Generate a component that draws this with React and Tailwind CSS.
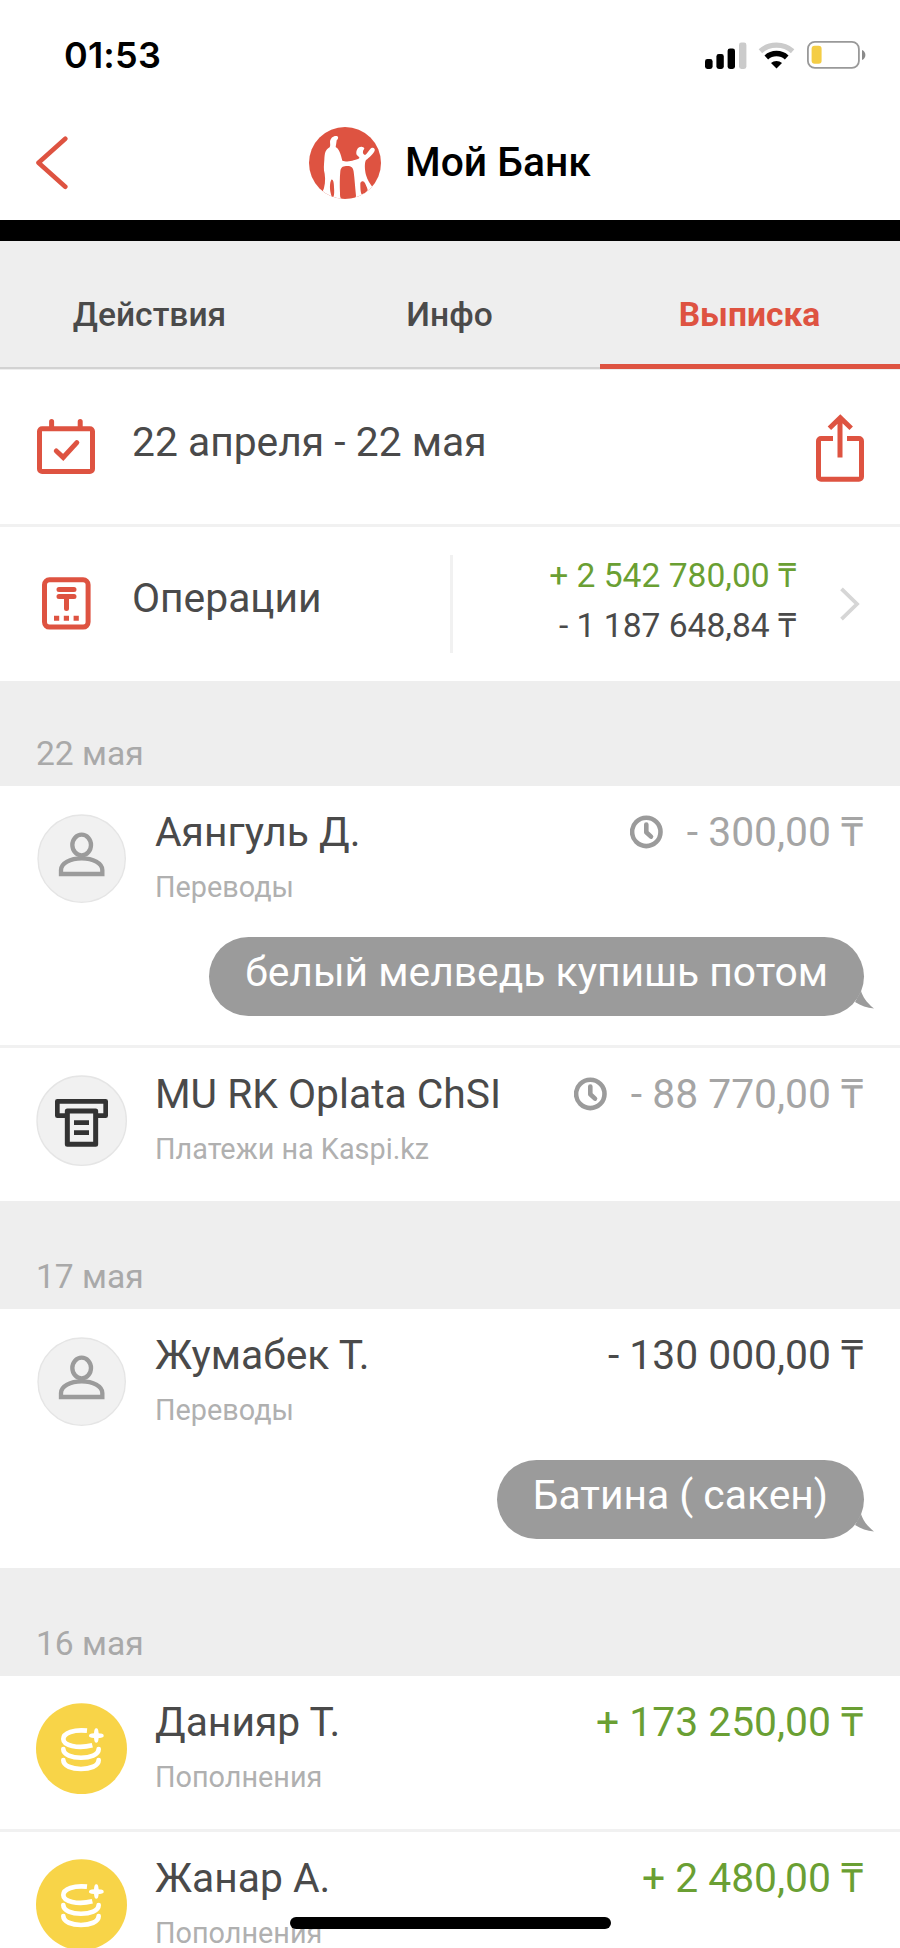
import clsx from 'clsx';

/* ──── Icons ──── */
const SignalIcon = () => (
  <svg width="42" height="27" viewBox="0 0 42 27">
    <rect x="0" y="17" width="7.6" height="10" rx="2.4" fill="#000" />
    <rect x="11.4" y="12" width="7.4" height="15" rx="2.4" fill="#000" />
    <rect x="22.6" y="6.4" width="7.4" height="20.6" rx="2.4" fill="#000" />
    <rect x="34" y="0.6" width="7.4" height="26.4" rx="2.4" fill="#cbcbcb" />
  </svg>
);

const WifiIcon = () => (
  <svg width="37" height="27" viewBox="0 0 37 27" fill="none">
    <path d="M2.4 9.2C11.5 1.1 25.5 1.1 34.6 9.2" stroke="#cbcbcb" strokeWidth="5.2" />
    <path d="M8.3 15.4C14 10.2 23 10.2 28.7 15.4" stroke="#000" strokeWidth="5.4" />
    <path d="M18.5 26.6L13 20.9C16 18.2 21 18.2 24 20.9Z" fill="#000" />
  </svg>
);

const BatteryIcon = () => (
  <svg width="59" height="28" viewBox="0 0 59 28" fill="none">
    <rect x="0.9" y="0.9" width="51" height="26" rx="7" stroke="#999" strokeWidth="1.8" />
    <rect x="4.6" y="4.8" width="10" height="18" rx="3" fill="#f4cd45" />
    <path d="M55 9C57.2 9.8 58.4 11.8 58.4 14S57.2 18.2 55 19Z" fill="#8a8a8a" />
  </svg>
);

const BackIcon = () => (
  <svg width="32" height="54" viewBox="0 0 32 54" fill="none">
    <path d="M29.3 2.7L2.5 26.7L29.3 50.7" stroke="#de5341" strokeWidth="4.6" strokeLinecap="round" strokeLinejoin="round" />
  </svg>
);

const Logo = () => (
  <svg width="72" height="72" viewBox="0 0 216 216">
    <clipPath id="logo-circle">
      <circle cx="108" cy="108" r="108" />
    </clipPath>
    <g clipPath="url(#logo-circle)">
      <rect width="216" height="216" fill="#de5341" />
      <path
        fill="#fff"
        d="M63 44C64 32 74 25 84 27C90 30 87 37 83 40C82 49 81 55 80 60C89 65 93 76 96 86L100 101C108 104 124 104 134 100C142 97 149 97 151 93C152 88 144 88 142 80C141 68 148 58 158 59C166 60 168 64 164 68C161 72 160 80 168 84C175 81 180 68 187 63C194 60 199 65 197 71C193 81 180 92 171 99C166 108 167 128 171 144C175 159 183 170 192 182L192 216H40V196C48 180 50 160 47 140C43 128 45 112 46 98C47 78 49 68 62 61C65 56 63 50 63 44Z"
      />
      <path
        fill="#de5341"
        d="M94 132C96 119 104 117 115 117C127 117 132 122 134 134C137 156 138 178 141 206C141 213 134 216 122 216H102C94 216 93 210 93 198C92 176 92 152 94 132ZM67 158C72 156 75 166 75 180C76 194 76 204 73 210C69 212 67 208 65 198C62 184 62 166 67 158ZM154 168C158 160 165 161 169 170C172 178 176 184 176 190C172 196 164 201 158 202C154 196 154 180 154 168Z"
      />
    </g>
  </svg>
);

const CalendarIcon = () => (
  <svg width="58" height="56" viewBox="0 0 58 56" fill="none" stroke="#de5341" strokeWidth="5">
    <rect x="2.5" y="9.7" width="53" height="42.8" rx="2.6" />
    <path d="M14.6 9V2.6M43.2 9V2.6M19.3 32L26.2 38.4L39.8 23.6" strokeLinecap="round" />
  </svg>
);

const ShareIcon = () => (
  <svg width="48" height="68" viewBox="0 0 48 68" fill="none" stroke="#de5341" strokeWidth="5">
    <path d="M17 24.6H5A2.5 2.5 0 0 0 2.5 27.1V62.7A2.5 2.5 0 0 0 5 65.2H43A2.5 2.5 0 0 0 45.5 62.7V27.1A2.5 2.5 0 0 0 43 24.6H31" />
    <path d="M24 43.5V4M13.4 14.2L24.3 3.8L35.2 14.2" />
  </svg>
);

const OperationsIcon = () => (
  <svg width="49" height="53" viewBox="0 0 49 53" fill="none" stroke="#de5341" strokeWidth="5">
    <rect x="2.5" y="2.7" width="43.6" height="47.4" rx="5" />
    <path d="M17 12.4H32M17 19.4H32M24.5 20V31.5" strokeLinecap="round" />
    <path d="M12 41.3H17.2M21.8 41.3H27M31.6 41.3H36.8" />
  </svg>
);

const ChevronIcon = () => (
  <svg width="20" height="34" viewBox="0 0 20 34" fill="none">
    <path d="M1.5 1.8L17 17L1.5 32.2" stroke="#d6d6d6" strokeWidth="3.8" />
  </svg>
);

const ClockIcon = () => (
  <svg width="33" height="34" viewBox="0 0 33 34" fill="none" stroke="#9b9b9b">
    <circle cx="16.3" cy="16.9" r="14.2" strokeWidth="4.6" />
    <path d="M16.3 9.6V17.2L21 21.6" strokeWidth="4.6" strokeLinecap="round" strokeLinejoin="round" />
  </svg>
);

const PersonAvatar = () => (
  <svg width="91" height="91" viewBox="0 0 273 273" fill="none">
    <circle cx="137" cy="137" r="131" fill="#f1f1f1" stroke="#e5e5e5" strokeWidth="4" />
    <ellipse cx="137" cy="96" rx="28" ry="31" stroke="#9b9b9b" strokeWidth="13" />
    <path d="M75 183V171C75 150 103 136 137 136S199 150 199 171V183Z" stroke="#9b9b9b" strokeWidth="13" />
  </svg>
);

const PaymentAvatar = () => (
  <svg width="91" height="91" viewBox="0 0 273 273" fill="none">
    <circle cx="137" cy="137" r="134" fill="#f1f1f1" stroke="#e5e5e5" strokeWidth="4" />
    <path d="M94 122H64V79H209V122H179" stroke="#333" strokeWidth="14" strokeLinejoin="round" />
    <rect x="94" y="108" width="85" height="100" stroke="#333" strokeWidth="15" strokeLinejoin="round" />
    <path d="M114 143H159M114 173H159" stroke="#333" strokeWidth="14" />
  </svg>
);

const TopUpAvatar = () => (
  <svg width="91" height="91" viewBox="0 0 273 273" fill="none">
    <circle cx="136.500" cy="137" r="136.500" fill="#f8d448" />
    <g stroke="#fff" strokeWidth="14">
      <path d="M153 83C115 79 82 89 82 108C82 127 124 138 169 127" />
      <path d="M82 138C82 173 188 173 188 138M82 171C82 207 188 207 188 171" strokeLinecap="round" />
    </g>
    <path
      fill="#fff"
      d="M181 76C185 76 187 79 188 91C200 92 203 94 203 98S200 104 188 105C187 116 185 119 181 119S175 116 174 105C163 104 159 102 159 98S163 92 174 91C175 79 177 76 181 76Z"
    />
  </svg>
);

const avatars = {
  person: PersonAvatar,
  payment: PaymentAvatar,
  topup: TopUpAvatar,
};

/* ──── Data ──── */
const tabs = ['Действия', 'Инфо', 'Выписка'];

const groups = [
  {
    date: '22 мая',
    height: 'h-[105px]',
    items: [
      {
        name: 'Аянгуль Д.',
        type: 'Переводы',
        amount: '- 300,00 ₸',
        avatar: 'person',
        pending: true,
        comment: 'белый мелведь купишь потом',
      },
      {
        name: 'MU RK Oplata ChSI',
        type: 'Платежи на Kaspi.kz',
        amount: '- 88 770,00 ₸',
        avatar: 'payment',
        pending: true,
      },
    ],
  },
  {
    date: '17 мая',
    height: 'h-[108px]',
    items: [
      {
        name: 'Жумабек Т.',
        type: 'Переводы',
        amount: '- 130 000,00 ₸',
        avatar: 'person',
        comment: 'Батина ( сакен)',
      },
    ],
  },
  {
    date: '16 мая',
    height: 'h-[108px]',
    items: [
      { name: 'Данияр Т.', type: 'Пополнения', amount: '+ 173 250,00 ₸', avatar: 'topup', income: true },
      { name: 'Жанар А.', type: 'Пополнения', amount: '+ 2 480,00 ₸', avatar: 'topup', income: true },
    ],
  },
];

const Bubble = ({ text }) => (
  <div className="relative mt-[33px] ml-auto h-[79px] w-max rounded-full bg-[#9b9b9b] px-9 pt-[11px] text-[40.800px] leading-[48px] text-white">
    {text}
    <svg className="absolute -right-[10px] bottom-[6px]" width="22" height="20" viewBox="0 0 22 20">
      <path d="M9 1C11 7 14 12 22 18.500C15 17.500 9 16 3 12Z" fill="#9b9b9b" />
    </svg>
  </div>
);

const Transaction = ({ item }) => {
  const Avatar = avatars[item.avatar];

  return (
    <div className={clsx('px-9 pt-[22px]', item.comment ? 'h-[259px]' : 'h-[153px]')}>
      <div className="flex">
        <div className="mt-[5px] h-[91px] w-[91px] shrink-0">
          <Avatar />
        </div>
        <div className="ml-[28px] flex-1">
          <div className="flex items-center justify-between text-[40.800px] leading-[48px] whitespace-nowrap">
            <span className="text-[#4a4a4a]">{item.name}</span>
            <span
              className={clsx(
                'mr-px flex items-center',
                item.pending && 'text-[#a5a5a5]',
                item.income && 'text-[#6a9f33]',
                !item.pending && !item.income && 'text-[#4a4a4a]'
              )}
            >
              {item.pending && (
                <span className="mr-6">
                  <ClockIcon />
                </span>
              )}
              {item.amount}
            </span>
          </div>
          <p className="mt-[14px] text-[28.800px] leading-[34px] text-[#b0b0b0]">{item.type}</p>
        </div>
      </div>
      {item.comment && <Bubble text={item.comment} />}
    </div>
  );
};

const App = () => (
  <div className="relative h-[1948px] w-[900px] overflow-hidden bg-white font-['Roboto',sans-serif]">
    {/* ──── Status bar ──── */}
    <div className="flex h-[110px] items-center justify-between pr-[34px] pl-16">
      <span className="font-['Inter',sans-serif] text-[36px] font-semibold tracking-[0.200px]">01:53</span>
      <div className="flex items-center">
        <SignalIcon />
        <span className="mr-[12px] ml-[11px]">
          <WifiIcon />
        </span>
        <BatteryIcon />
      </div>
    </div>

    {/* ──── Header ──── */}
    <header className="flex h-[110px] items-start">
      <button className="mt-[26px] ml-9">
        <BackIcon />
      </button>
      <div className="mt-[17px] ml-[241px] flex items-center">
        <Logo />
        <h1 className="ml-[24px] pb-[2px] text-[40.800px] leading-[48px] font-medium text-black">Мой Банк</h1>
      </div>
    </header>
    <div className="h-[21px] bg-black" />

    {/* ──── Tabs ──── */}
    <nav className="flex h-[129px] bg-[#eeeeee]">
      {tabs.map((tab, i) => (
        <button
          key={tab}
          className={clsx(
            'flex h-[128px] flex-1 justify-center pt-[54px] pr-px text-[33.600px] leading-[40px]',
            i === 2
              ? 'border-b-5 border-[#de5341] font-bold text-[#de5341]'
              : 'border-b-2 border-[#d2d2d2] font-medium text-[#4a4a4a]'
          )}
        >
          {tab}
        </button>
      ))}
    </nav>

    {/* ──── Period ──── */}
    <section className="flex h-[157px] items-start border-b-3 border-[#f1f1f1] pr-9 pl-[37px] text-[#4a4a4a]">
      <span className="mt-[49px]">
        <CalendarIcon />
      </span>
      <span className="mt-[48px] ml-[37px] flex-1 text-[40.800px] leading-[48px]">22 апреля - 22 мая</span>
      <span className="mt-[44px]">
        <ShareIcon />
      </span>
    </section>

    {/* ──── Totals ──── */}
    <section className="flex h-[154px] items-start pr-10 pl-[42px] text-[#4a4a4a]">
      <span className="mt-[50px]">
        <OperationsIcon />
      </span>
      <span className="mt-[47px] ml-[41px] w-[318px] text-[40.800px] leading-[48px]">Операции</span>
      <span className="mt-[28px] h-[98px] w-[3px] bg-[#f1f1f1]" />
      <div className="mt-[24px] mr-[44px] flex-1 text-right text-[33.600px] leading-[50px]">
        <p className="text-[#6a9f33]">+ 2 542 780,00 ₸</p>
        <p>- 1 187 648,84 ₸</p>
      </div>
      <span className="mt-[60px]">
        <ChevronIcon />
      </span>
    </section>

    {/* ──── Statement ──── */}
    {groups.map((group) => (
      <section key={group.date}>
        <h2
          className={clsx(
            'flex items-end bg-[#eeeeee] pb-[12px] pl-9 text-[33.600px] leading-[40px] text-[#a9a9a9]',
            group.height
          )}
        >
          {group.date}
        </h2>
        <ul className="divide-y-3 divide-[#f1f1f1]">
          {group.items.map((item) => (
            <li key={item.name}>
              <Transaction item={item} />
            </li>
          ))}
        </ul>
      </section>
    ))}

    {/* ──── Home indicator ──── */}
    <div className="absolute bottom-[19px] left-[290px] h-[12px] w-[321px] rounded-full bg-black" />
  </div>
);

export default App;
